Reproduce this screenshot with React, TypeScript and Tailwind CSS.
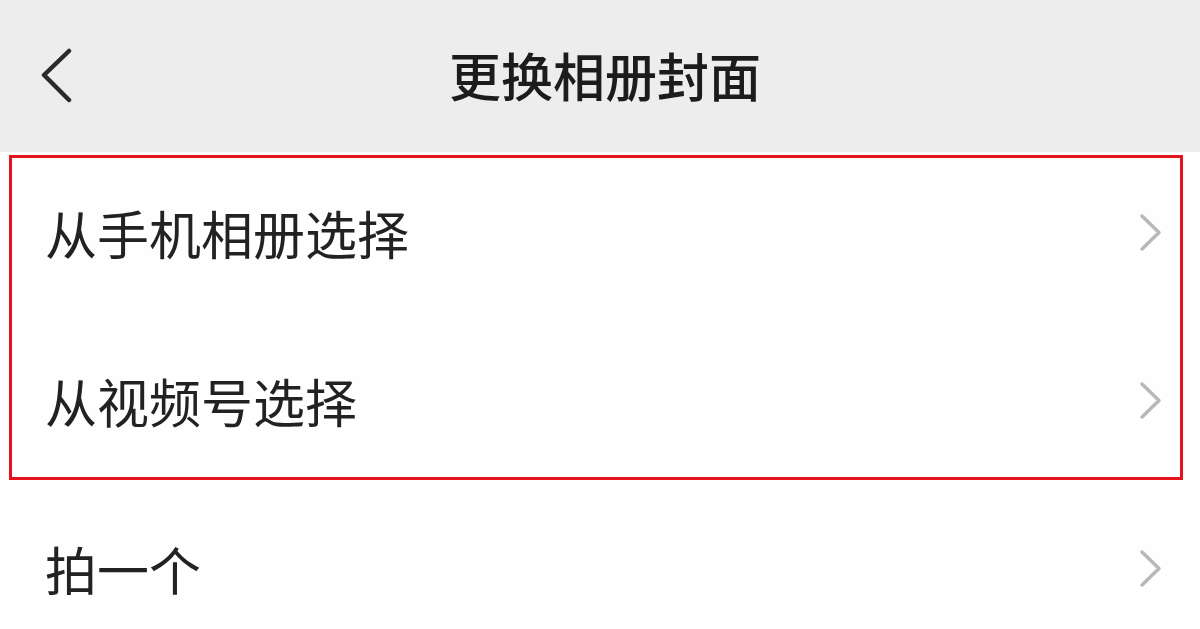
import React from 'react';

const rows = ['从手机相册选择', '从视频号选择', '拍一个'];

const BackIcon = () => (
  <svg width="34" height="56" viewBox="0 0 34 56" fill="none">
    <path d="M29 3 L4 27 L29 52" stroke="#2b2b2b" strokeWidth="4.5" strokeLinecap="round" strokeLinejoin="round" />
  </svg>
);

const Chevron = () => (
  <svg width="26" height="40" viewBox="0 0 26 40" fill="none">
    <path d="M4 3 L21 19.5 L4 36" stroke="#b8b8b8" strokeWidth="3.5" strokeLinecap="round" strokeLinejoin="round" />
  </svg>
);

export default function App() {
  return (
    <div
      className="relative w-[1200px] h-[629px] overflow-hidden bg-[#fefefe]"
      style={{ fontFamily: '"Noto Sans CJK SC", "Noto Sans", sans-serif' }}
    >
      <header className="relative h-[152px] bg-[#ededed] flex items-center justify-center">
        <div className="absolute left-[40px] top-[48px]">
          <BackIcon />
        </div>
        <h1 className="text-[52px] font-medium text-[#1c1c1c] leading-none -mt-[2px] ml-[10px]">更换相册封面</h1>
      </header>

      <div className="-mt-[3px]">
        {rows.map(label => (
          <div key={label} className="h-[168px] flex items-center justify-between pl-[45px] pr-[36px]">
            <span className="text-[52px] text-[#222] leading-none">{label}</span>
            <Chevron />
          </div>
        ))}
      </div>

      <div className="absolute left-[9px] top-[155px] w-[1174px] h-[325px] border-[3px] border-[#e3141c] pointer-events-none" />
    </div>
  );
}
